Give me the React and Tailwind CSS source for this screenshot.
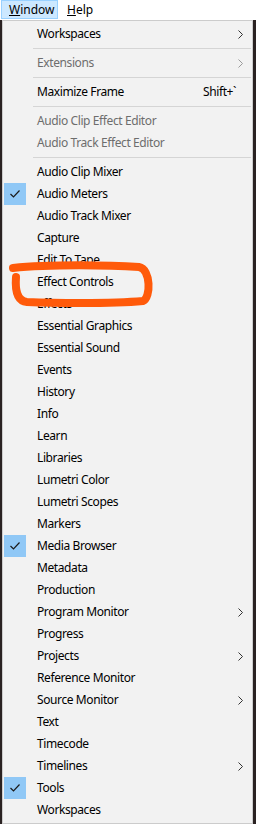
const items = [
  { label: 'Workspaces', arrow: true },
  { sep: true },
  { label: 'Extensions', arrow: true, disabled: true },
  { sep: true },
  { label: 'Maximize Frame', shortcut: 'Shift+`' },
  { sep: true },
  { label: 'Audio Clip Effect Editor', disabled: true },
  { label: 'Audio Track Effect Editor', disabled: true },
  { sep: true },
  { label: 'Audio Clip Mixer' },
  { label: 'Audio Meters', checked: true },
  { label: 'Audio Track Mixer' },
  { label: 'Capture' },
  { label: 'Edit To Tape' },
  { label: 'Effect Controls' },
  { label: 'Effects' },
  { label: 'Essential Graphics' },
  { label: 'Essential Sound' },
  { label: 'Events' },
  { label: 'History' },
  { label: 'Info' },
  { label: 'Learn' },
  { label: 'Libraries' },
  { label: 'Lumetri Color' },
  { label: 'Lumetri Scopes' },
  { label: 'Markers' },
  { label: 'Media Browser', checked: true },
  { label: 'Metadata' },
  { label: 'Production' },
  { label: 'Program Monitor', arrow: true },
  { label: 'Progress' },
  { label: 'Projects', arrow: true },
  { label: 'Reference Monitor' },
  { label: 'Source Monitor', arrow: true },
  { label: 'Text' },
  { label: 'Timecode' },
  { label: 'Timelines', arrow: true },
  { label: 'Tools', checked: true },
  { label: 'Workspaces' },
];

function Chevron({ disabled }) {
  return (
    <svg width="5" height="9" viewBox="0 0 5 9" className="shrink-0">
      <polyline
        points="0.5,0.5 4.5,4.5 0.5,8.5"
        fill="none"
        stroke={disabled ? '#9a9a9a' : '#333'}
        strokeWidth="1"
      />
    </svg>
  );
}

function Check() {
  return (
    <svg width="12" height="10" viewBox="0 0 12 10">
      <polyline points="1.5,5 4.5,8 10.5,1.5" fill="none" stroke="#1a1a1a" strokeWidth="1.2" />
    </svg>
  );
}

function MenuRow({ item }) {
  if (item.sep) {
    return (
      <div className="h-[7px] flex items-center pl-[30px] pr-[1px]">
        <div className="h-px w-full bg-[#d5d5d5]" />
      </div>
    );
  }
  return (
    <div className="h-[22px] flex items-center">
      <div
        className={`w-[22px] h-[22px] ml-[1px] flex items-center justify-center ${
          item.checked ? 'bg-[#90c8f6]' : ''
        }`}
      >
        {item.checked && <Check />}
      </div>
      <span
        className={`ml-[11px] flex-1 whitespace-nowrap tracking-[-0.4px] ${
          item.disabled ? 'text-[#6d6d6d]' : 'text-black'
        }`}
      >
        {item.label}
      </span>
      {item.shortcut && <span className="mr-[16px] text-black tracking-[-0.4px]">{item.shortcut}</span>}
      {item.arrow && (
        <span className="mr-[9px] flex items-center">
          <Chevron disabled={item.disabled} />
        </span>
      )}
    </div>
  );
}

export default function App() {
  return (
    <div
      className="relative w-[256px] h-[824px] overflow-hidden bg-[#2a2222] text-[12px]"
      style={{ fontFamily: '"Noto Sans", "Liberation Sans", sans-serif' }}
    >
      <div className="h-[20px] bg-white flex items-stretch">
        <div className="ml-[1px] w-[57px] h-[19px] bg-[#cce8ff] border border-[#99d1ff] flex items-center pl-[7px] text-black">
          <span>
            <span className="underline">W</span>indow
          </span>
        </div>
        <div className="flex items-center pl-[9px] text-black">
          <span>
            <span className="underline">H</span>elp
          </span>
        </div>
      </div>

      <div className="ml-[2px] w-[251px] bg-[#f2f2f2] border border-[#cccccc] pt-[2px] pb-[2px]">
        {items.map((item, i) => (
          <MenuRow key={i} item={item} />
        ))}
      </div>

      <svg
        className="absolute left-0 top-0 pointer-events-none"
        width="256"
        height="824"
        viewBox="0 0 256 824"
      >
        <path
          d="M13 268 C 50 264, 110 265, 139 267 C 151 269, 151 298, 143 301 C 110 304, 50 303, 27 302 C 17 301, 15 290, 16 277"
          fill="none"
          stroke="#ff5a0a"
          strokeWidth="8"
          strokeLinecap="round"
          strokeLinejoin="round"
        />
      </svg>
    </div>
  );
}
